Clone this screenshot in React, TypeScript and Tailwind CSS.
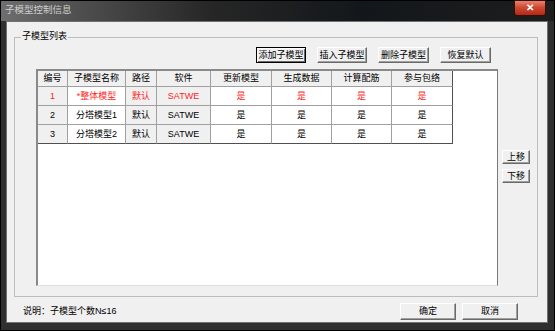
import React from "react";

const FONT = '"Liberation Sans", "Noto Sans CJK SC", sans-serif';

// column widths include the 1px right grid line
const COLS = [
  { w: "w-[30px]", label: "编号", gray: true },
  { w: "w-[58px]", label: "子模型名称", gray: false },
  { w: "w-[31px]", label: "路径", gray: true },
  { w: "w-[54px]", label: "软件", gray: true },
  { w: "w-[61px]", label: "更新模型", gray: false },
  { w: "w-[60px]", label: "生成数据", gray: false },
  { w: "w-[60px]", label: "计算配筋", gray: false },
  { w: "w-[61px]", label: "参与包络", gray: false },
];

const ROWS = [
  { red: true, cells: ["1", "*整体模型", "默认", "SATWE", "是", "是", "是", "是"] },
  { red: false, cells: ["2", "分塔模型1", "默认", "SATWE", "是", "是", "是", "是"] },
  { red: false, cells: ["3", "分塔模型2", "默认", "SATWE", "是", "是", "是", "是"] },
];

function Btn({ label, w, h = "h-[16px]", focused = false }: { label: string; w: string; h?: string; focused?: boolean }) {
  return (
    <div
      className={`${w} ${h} flex items-center justify-center bg-[#f0f0f0] text-[9px] leading-none text-black border ${
        focused
          ? "border-black shadow-[inset_1px_1px_0_#fff,inset_-1px_-1px_0_#696969]"
          : "border-t-white border-l-white border-r-[#696969] border-b-[#696969] shadow-[inset_-1px_-1px_0_#a0a0a0]"
      }`}
    >
      {label}
    </div>
  );
}

export default function App() {
  return (
    <div className="w-[555px] h-[331px] bg-[#2f2f2f] border border-black flex flex-col" style={{ fontFamily: FONT }}>
      {/* Title bar */}
      <div className="h-[20px] flex items-start bg-[linear-gradient(to_right,#6e6e6e_0%,#4f4f4f_14%,#262626_38%,#13171b_65%,#1d1d1d_100%)]">
        <span className="pl-[4px] pt-[4px] text-[9.5px] leading-none text-[#cfcfcf]">子模型控制信息</span>
        <div className="ml-auto mr-[8px] w-[32px] h-[16px] -mt-px rounded-b-[3px] border border-[#3a0e08] bg-[linear-gradient(to_bottom,#e8846f_0%,#cf4a33_45%,#b02a17_100%)] flex items-center justify-center">
          <span className="text-white text-[10px] font-bold leading-none">✕</span>
        </div>
      </div>

      {/* Client area */}
      <div className="ml-[5px] mr-[6px] mb-[7px] flex-1 bg-[#f0f0f0] border border-[#707070] flex flex-col">
        {/* Group box */}
        <div className="ml-[7px] mt-[15px] w-[524px] h-[260px] border border-[#bcbcbc] relative flex flex-col">
          <span className="absolute left-[6px] -top-[6px] px-[1px] bg-[#f0f0f0] text-[9px] leading-none text-black">子模型列表</span>

          {/* top buttons */}
          <div className="mt-[9px] ml-[241px] flex gap-[11px]">
            <Btn label="添加子模型" w="w-[50px]" focused />
            <Btn label="插入子模型" w="w-[50px]" />
            <Btn label="删除子模型" w="w-[51px]" />
            <Btn label="恢复默认" w="w-[51px]" />
          </div>

          {/* table + side buttons */}
          <div className="mt-[6px] ml-[21px] flex">
            <div className="w-[462px] h-[217px] bg-white border-l-2 border-t-2 border-l-[#8a8a8a] border-t-[#8a8a8a] border-r border-b border-r-[#7a7a7a] border-b-[#e0e0e0] flex flex-col text-[9px] leading-none">
              <div className="flex h-[16px]">
                {COLS.map((c, i) => (
                  <div
                    key={c.label}
                    className={`${c.w} h-full bg-[#f0f0f0] flex items-center justify-center border-b border-b-[#a0a0a0] border-r ${
                      i === COLS.length - 1 ? "border-r-[#505050]" : "border-r-[#a0a0a0]"
                    } text-black`}
                  >
                    {c.label}
                  </div>
                ))}
              </div>
              {ROWS.map((r, ri) => (
                <div key={ri} className="flex h-[19px]">
                  {r.cells.map((txt, ci) => (
                    <div
                      key={ci}
                      className={`${COLS[ci].w} h-full flex items-center justify-center border-r border-b ${
                        ci === COLS.length - 1 ? "border-r-[#505050]" : "border-r-[#a0a0a0]"
                      } ${ri === ROWS.length - 1 ? "border-b-[#505050]" : "border-b-[#a0a0a0]"} ${
                        COLS[ci].gray ? "bg-[#f0f0f0]" : "bg-white"
                      } ${r.red ? "text-[#ff1c1c]" : "text-black"}`}
                    >
                      {txt}
                    </div>
                  ))}
                </div>
              ))}
            </div>

            <div className="ml-[4px] mt-[81px] flex flex-col gap-[5px]">
              <Btn label="上移" w="w-[28px]" h="h-[14px]" />
              <Btn label="下移" w="w-[28px]" h="h-[14px]" />
            </div>
          </div>
        </div>

        {/* bottom row */}
        <div className="mt-[6px] pl-[16px] pr-[29px] flex items-center">
          <span className="text-[9px] leading-none text-black">说明：子模型个数N≤16</span>
          <div className="ml-auto flex gap-[6px]">
            <Btn label="确定" w="w-[56px]" h="h-[17px]" />
            <Btn label="取消" w="w-[56px]" h="h-[17px]" />
          </div>
        </div>
      </div>
    </div>
  );
}
